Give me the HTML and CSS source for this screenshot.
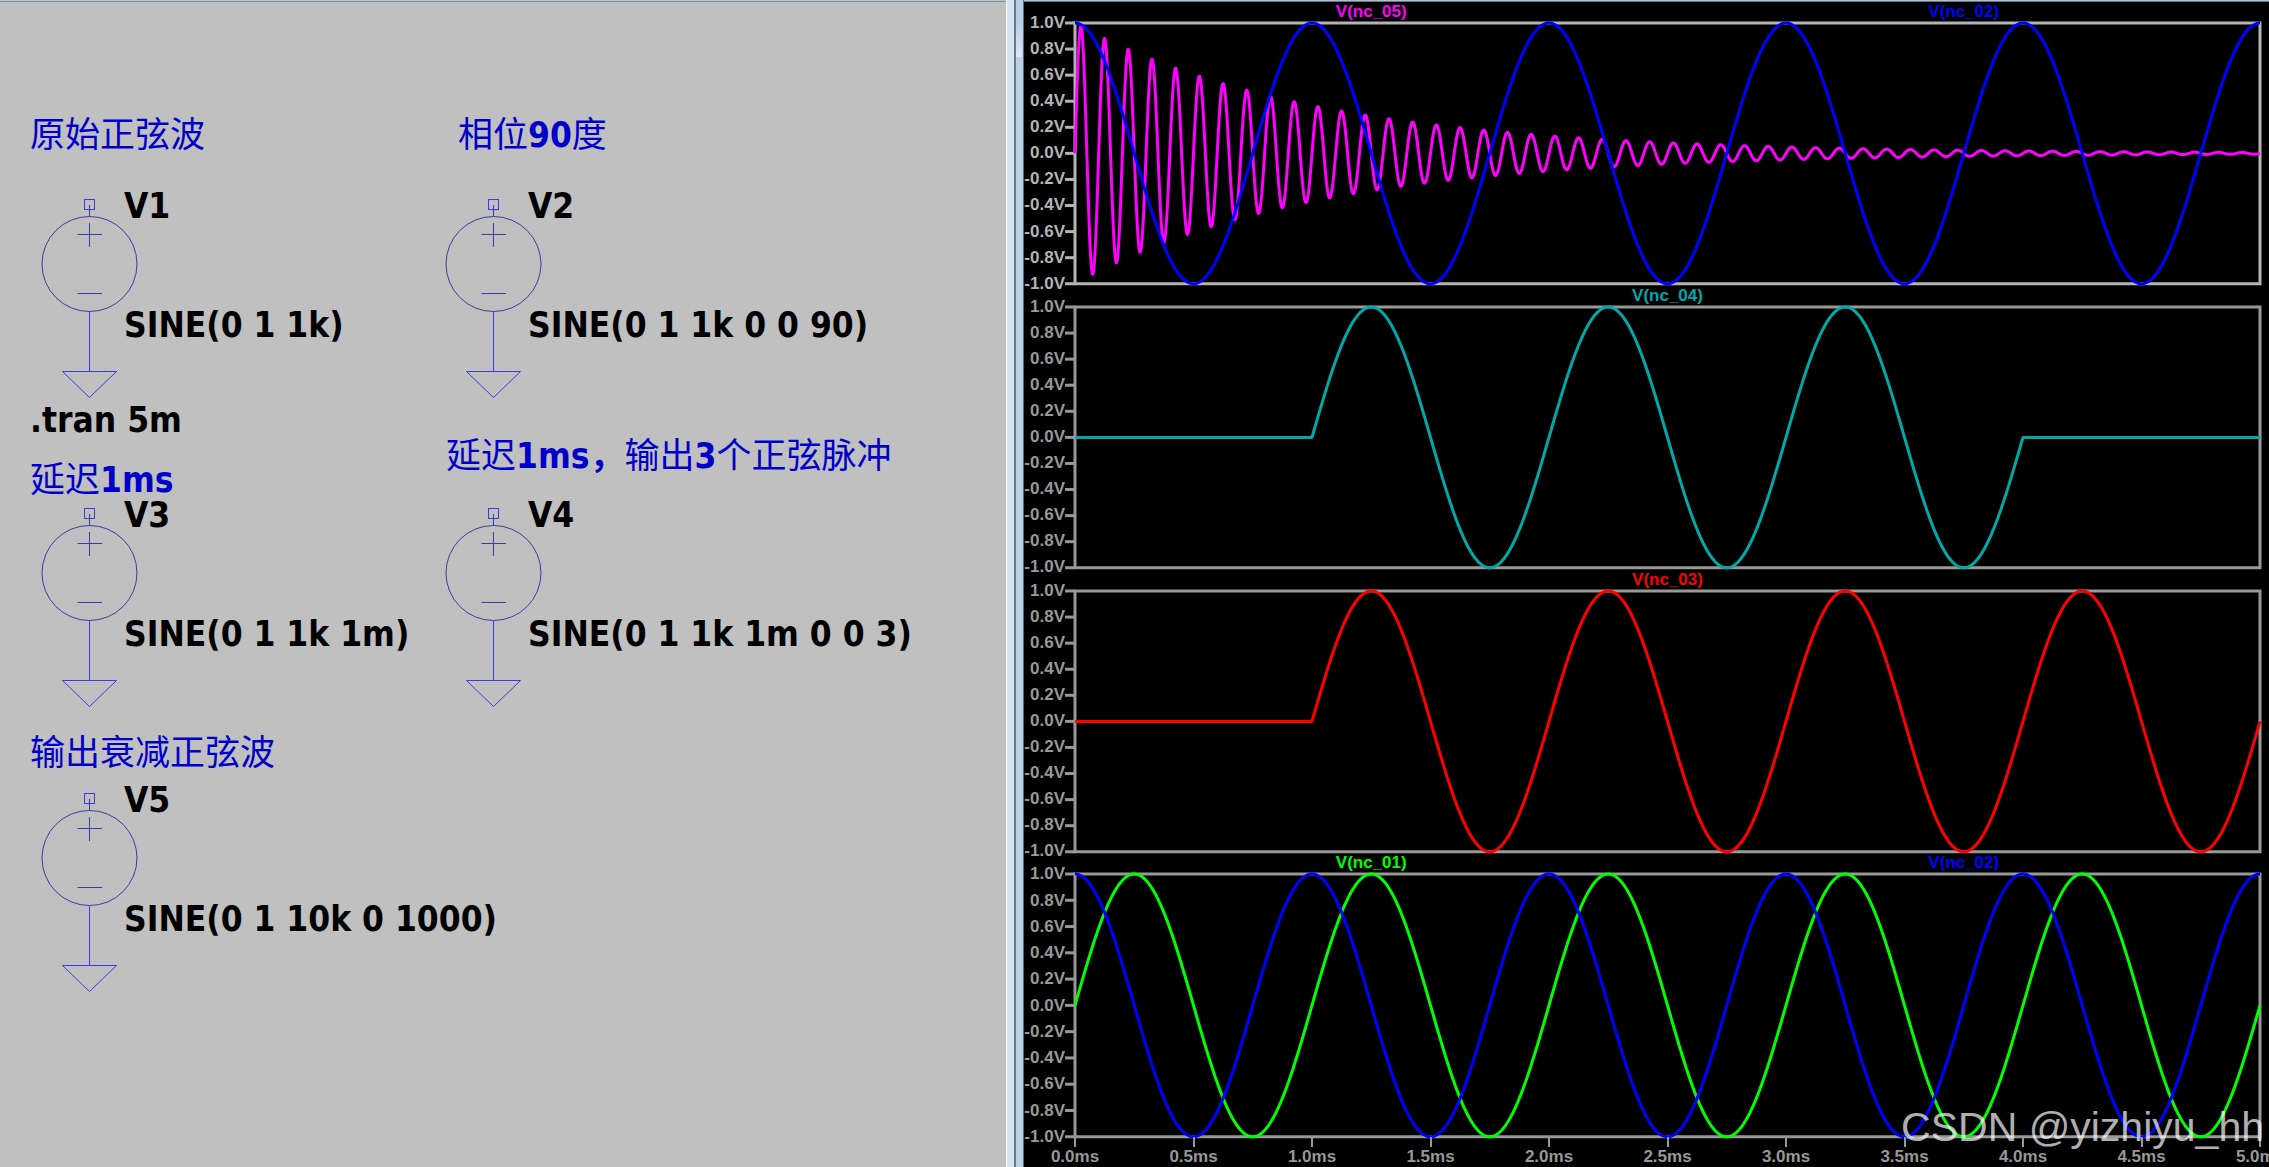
FILE: index.html
```html
<!DOCTYPE html>
<html lang="zh-CN">
<head>
<meta charset="utf-8">
<title>SINE 电压源</title>
<link rel="stylesheet" href="styles.css">
</head>
<body>
<svg class="defs" aria-hidden="true">
  <symbol id="source" overflow="visible">
    <rect class="wire" x="42.5" y="-0.5" width="10" height="10"/>
    <path class="wire" d="M47.5 111.5V171.5M20.5 171.5H74.5L47.5 197.5Z"/>
    <circle class="body" cx="47.5" cy="64" r="47.5"/>
    <path class="body" d="M47.5 5V16.5M47.5 23V47M35.5 34.5H60M35.5 93.5H60"/>
  </symbol>
</svg>
<main class="app">
  <section class="schematic" aria-label="电路图">
    <p class="note n1">原始正弦波</p>
    <p class="note n2">相位<b>90</b>度</p>
    <p class="note n3">延迟<b>1ms</b></p>
    <p class="note n4">延迟<b>1ms，</b>输出<b>3</b>个正弦脉冲</p>
    <p class="note n5">输出衰减正弦波</p>
    <p class="directive">.tran 5m</p>
    <div class="part v1"><svg class="symbol"><use href="#source"/></svg><div class="labels"><span>V1</span><span>SINE(0 1 1k)</span></div></div>
    <div class="part v2"><svg class="symbol"><use href="#source"/></svg><div class="labels"><span>V2</span><span>SINE(0 1 1k 0 0 90)</span></div></div>
    <div class="part v3"><svg class="symbol"><use href="#source"/></svg><div class="labels"><span>V3</span><span>SINE(0 1 1k 1m)</span></div></div>
    <div class="part v4"><svg class="symbol"><use href="#source"/></svg><div class="labels"><span>V4</span><span>SINE(0 1 1k 1m 0 0 3)</span></div></div>
    <div class="part v5"><svg class="symbol"><use href="#source"/></svg><div class="labels"><span>V5</span><span>SINE(0 1 10k 0 1000)</span></div></div>
  </section>
  <div class="splitter"></div>
  <section class="waves" aria-label="波形">
    <div class="pane active" data-traces="nc_05 nc_02"></div>
    <div class="pane" data-traces="nc_04"></div>
    <div class="pane" data-traces="nc_03"></div>
    <div class="pane last" data-traces="nc_01 nc_02"></div>
    <div class="time-axis"></div>
    <p class="watermark">CSDN @yizhiyu_hh</p>
  </section>
</main>
<script src="plot.js"></script>
</body>
</html>
```
FILE: styles.css
```css
* { box-sizing: border-box; }
body { margin: 0; background: #000; }
p { margin: 0; }
.defs { position: absolute; width: 0; height: 0; }

.app {
  display: grid;
  grid-template: 100vh / minmax(0, 1006fr) 18px minmax(0, 1245fr);
  overflow: hidden;
}

/* schematic */
.schematic {
  position: relative;
  overflow: hidden;
  background: #c0c0c0;
  box-shadow: inset 0 1px #b4c8d8, inset 0 2px #868c94;
  font: 700 35px/42px "DejaVu Sans Condensed", "Noto Sans CJK SC", sans-serif;
  color: #000;
  white-space: nowrap;
}
.note, .directive, .part { position: absolute; }
.note { font-weight: 400; color: #0000c8; }
.note b { font-weight: 700; }
.directive { left: 30px; top: 399px; }
.n1 { left: 30px; top: 114px; }
.n2 { left: 458px; top: 114px; }
.n3 { left: 30px; top: 459px; }
.n4 { left: 446px; top: 435px; }
.n5 { left: 30px; top: 732px; }
.part { display: flex; }
.v1 { left: 42px; top: 185px; }
.v2 { left: 446px; top: 185px; }
.v3 { left: 42px; top: 494px; }
.v4 { left: 446px; top: 494px; }
.v5 { left: 42px; top: 779px; }
.symbol { width: 82px; height: 198px; margin-top: 15px; overflow: visible; fill: none; }
.wire { stroke: #3c3cdc; }
.body { stroke: #3c3ca0; }
.labels { display: flex; flex-direction: column; gap: 77px; }

/* window border between the two panes */
.splitter {
  background:
    linear-gradient(#b6cfe9, #b6cfe9 25px, #dce8f5) 10px 0 / 6px 57px no-repeat,
    linear-gradient(90deg, #fff 0 1px, #d6e3f1 1px 8px, #70767d 8px 10px, #bad1ea 10px 17px, #60686f 17px);
}

/* waveforms */
.waves {
  position: relative;
  display: flex;
  flex-direction: column;
  overflow: hidden;
  background: #000;
  box-shadow: inset 0 1px #a9c4d8, inset 0 2px #68747f;
  padding-right: 9px;
  font: 700 17px/20px "Liberation Sans", Arial, sans-serif;
  color: #989898;
}
.pane {
  flex: 284 1 0;
  min-height: 0;
  display: grid;
  grid-template: 23px 1fr / 51px 1fr;
}
.pane.last { flex-grow: 286; }
.pane.active { color: #b4b4b4; }
.titles {
  grid-column: 2;
  display: grid;
  grid-auto-flow: column;
  grid-auto-columns: 1fr;
  padding-top: 2px;
  text-align: center;
}
.volts {
  display: flex;
  flex-direction: column;
  justify-content: space-between;
  align-items: flex-end;
  margin: -10px 10px -10px 0;
}
.plot { width: 100%; height: 100%; overflow: visible; fill: none; min-height: 0; }
.plot * { vector-effect: non-scaling-stroke; stroke-width: 3px; }
.frame { stroke: currentColor; }
.nc_01 { color: #0f0; }
.nc_02 { color: #00f; }
.nc_03 { color: #f00; }
.nc_04 { color: #00a8a8; }
.nc_05 { color: #f0f; }
.plot path { stroke: currentColor; stroke-linejoin: round; }
.time-axis {
  flex: 0 0 28px;
  display: flex;
  justify-content: space-between;
  margin-left: 51px;
}
.time-axis span {
  width: 0;
  display: flex;
  flex-direction: column;
  align-items: center;
}
.time-axis span::before {
  content: "";
  flex: 0 0 10px;
  width: 2px;
  background: currentColor;
}
.watermark {
  position: absolute;
  right: 5px;
  bottom: 17px;
  font: 400 41px/46px "Liberation Sans", Arial, sans-serif;
  color: rgba(255, 255, 255, 0.7);
}
```
FILE: plot.js
```js
const wave = (t, f, phase = 0) => Math.sin(2 * Math.PI * f * t + phase);
// Node voltages, with t in milliseconds.
const nodes = {
  nc_01: t => wave(t, 1),
  nc_02: t => wave(t, 1, Math.PI / 2),
  nc_03: t => (t < 1 ? 0 : wave(t - 1, 1)),
  nc_04: t => (t < 1 || t > 4 ? 0 : wave(t - 1, 1)),
  nc_05: t => Math.exp(-t) * wave(t, 10)
};
const W = 1000, H = 200, T = 5, STEPS = 2500;

function trace(fn) {
  let d = "";
  for (let i = 0; i <= STEPS; i++) {
    const t = i * T / STEPS;
    d += (i ? "L" : "M") + (t / T * W).toFixed(2) + " " + (H / 2 * (1 - fn(t))).toFixed(2);
  }
  return d;
}

document.querySelectorAll(".pane").forEach(pane => {
  const names = pane.dataset.traces.split(" ");
  let labels = "";
  for (let v = 10; v >= -10; v -= 2) labels += `<span>${(v / 10).toFixed(1)}V</span>`;
  let ticks = "";
  for (let i = 0; i <= 10; i++) ticks += `<line x1="-8.4" x2="0" y1="${i * 20}" y2="${i * 20}"/>`;
  pane.innerHTML =
    `<div class="titles">${names.map(n => `<span class="${n}">V(${n})</span>`).join("")}</div>` +
    `<div class="volts">${labels}</div>` +
    `<svg class="plot" viewBox="0 0 ${W} ${H}" preserveAspectRatio="none">` +
    `<g class="frame"><rect width="${W}" height="${H}"/>${ticks}</g>` +
    names.map(n => `<path class="${n}" d="${trace(nodes[n])}"/>`).join("") + `</svg>`;
});

let times = "";
for (let i = 0; i <= 10; i++) times += `<span>${(i / 2).toFixed(1)}ms</span>`;
document.querySelector(".time-axis").innerHTML = times;
```
